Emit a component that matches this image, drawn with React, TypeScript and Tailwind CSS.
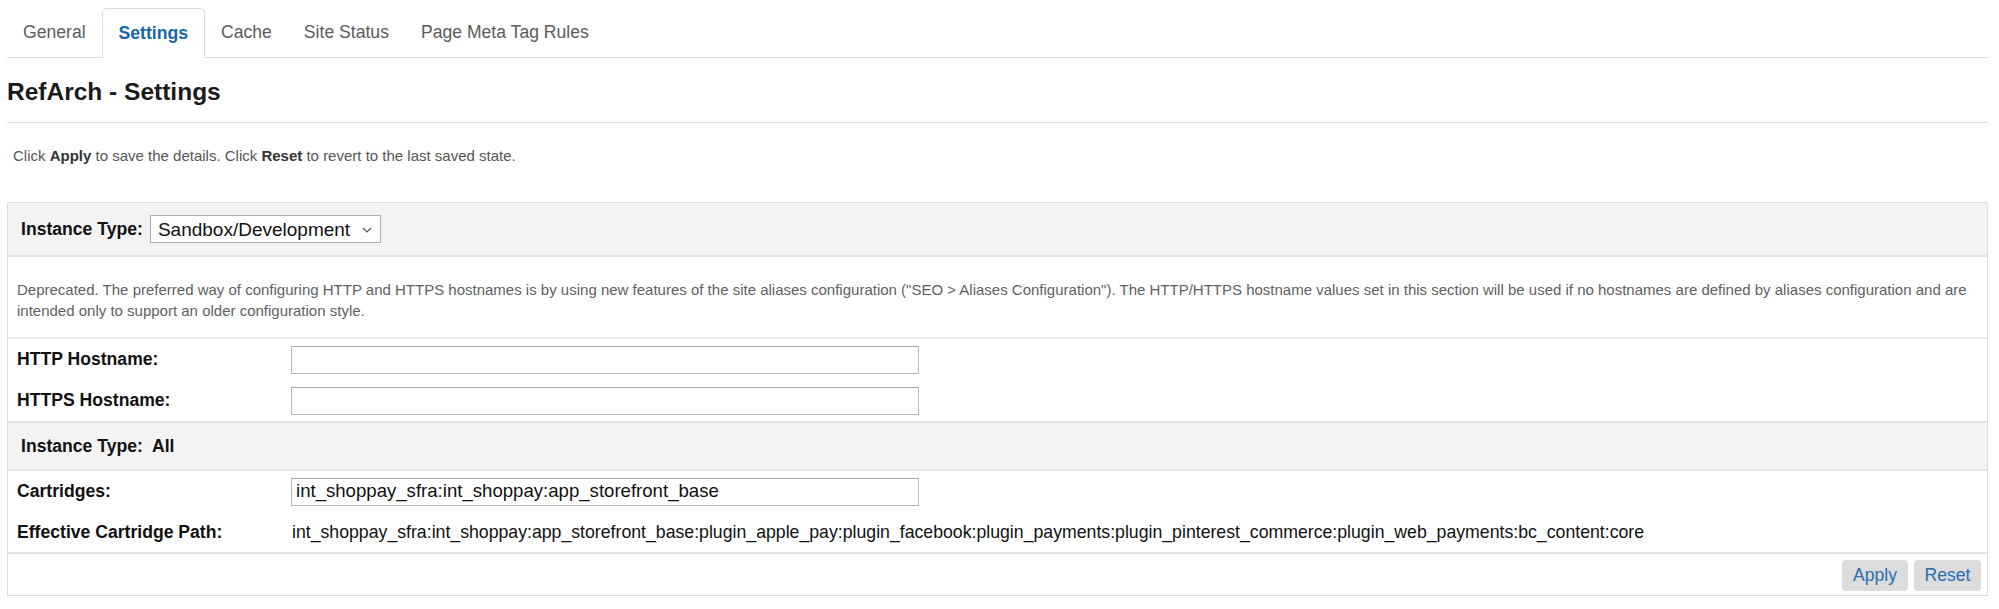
import React from "react";

const tabs = ["General", "Settings", "Cache", "Site Status", "Page Meta Tag Rules"];

function TextInput({ value }: { value?: string }) {
  return (
    <div className="h-[28px] w-[628px] border border-[#b3b8bd] border-t-[#a4a9ae] bg-white pl-[4px] flex items-center text-[18.6px] text-[#111] leading-none whitespace-nowrap overflow-hidden">
      {value}
    </div>
  );
}

export default function App() {
  return (
    <div className="bg-white min-h-[609px] pl-[7px] pr-[11px] font-['Liberation_Sans',Arial,Helvetica,sans-serif] text-[#222]">
      {/* Tabs */}
      <div className="flex items-end h-[58px] border-b border-[#dcdcdc]">
        {tabs.map((t) => {
          const active = t === "Settings";
          return (
            <div
              key={t}
              className={
                active
                  ? "h-[50px] -mb-px px-4 flex items-center bg-white border border-b-0 border-[#dcdcdc] rounded-t-[5px] text-[17.6px] font-bold text-[#1766a8]"
                  : "h-[49px] px-4 flex items-center text-[17.6px] text-[#5c5c5c]"
              }
            >
              {t}
            </div>
          );
        })}
      </div>

      {/* Title */}
      <div className="h-[65px] pt-[4px] flex items-center border-b border-[#dcdcdc]">
        <h1 className="text-[24.5px] font-bold text-[#1a1a1a] leading-none">RefArch - Settings</h1>
      </div>

      <div className="pt-[24px] pl-[6px] text-[15px] leading-[18px] text-[#555]">
        Click <b className="text-[#333]">Apply</b> to save the details. Click <b className="text-[#333]">Reset</b> to revert to the last saved state.
      </div>

      {/* Form box */}
      <div className="mt-[37px] border border-[#dedede]">
        {/* Instance type */}
        <div className="h-[54px] bg-[#f3f3f3] border-b-2 border-[#e2e2e2] flex items-center pl-[13px] gap-[7px]">
          <span className="text-[17.6px] font-bold text-[#111]">Instance Type:</span>
          <div className="h-[28px] w-[231px] bg-white border border-[#a9b0b8] flex items-center justify-between pl-[7px] pr-[8px]">
            <span className="text-[19px] text-[#111] leading-none">Sandbox/Development</span>
            <svg width="10" height="6" viewBox="0 0 10 6" className="mt-[1px]">
              <path d="M1 1 L5 5 L9 1" fill="none" stroke="#555" strokeWidth="1.2" />
            </svg>
          </div>
        </div>

        {/* Description */}
        <div className="pt-[22px] pb-[16px] pl-[9px] pr-[20px] text-[15px] leading-[21px] text-[#5f5f5f] border-b-2 border-[#ececec]">
          Deprecated. The preferred way of configuring HTTP and HTTPS hostnames is by using new features of the site aliases configuration ("SEO &gt; Aliases Configuration"). The HTTP/HTTPS hostname values set in this section will be used if no hostnames are defined by aliases configuration and are intended only to support an older configuration style.
        </div>

        {/* HTTP */}
        <div className="h-[41px] flex items-center">
          <div className="w-[283px] pl-[9px] text-[17.6px] font-bold text-[#111]">HTTP Hostname:</div>
          <TextInput />
        </div>
        <div className="h-[41px] flex items-center">
          <div className="w-[283px] pl-[9px] text-[17.6px] font-bold text-[#111]">HTTPS Hostname:</div>
          <TextInput />
        </div>

        {/* Instance type All */}
        <div className="h-[50px] bg-[#f3f3f3] border-y-2 border-[#e4e4e4] flex items-center pl-[13px]">
          <span className="text-[17.6px] font-bold text-[#111] whitespace-pre">Instance Type:  All</span>
        </div>

        {/* Cartridges */}
        <div className="h-[41px] flex items-center">
          <div className="w-[283px] pl-[9px] text-[17.6px] font-bold text-[#111]">Cartridges:</div>
          <TextInput value="int_shoppay_sfra:int_shoppay:app_storefront_base" />
        </div>
        <div className="h-[42px] flex items-center border-b-2 border-[#e4e4e4]">
          <div className="w-[283px] pl-[9px] text-[17.6px] font-bold text-[#111]">Effective Cartridge Path:</div>
          <div className="pl-[1px] text-[17.7px] text-[#111] whitespace-nowrap">
            int_shoppay_sfra:int_shoppay:app_storefront_base:plugin_apple_pay:plugin_facebook:plugin_payments:plugin_pinterest_commerce:plugin_web_payments:bc_content:core
          </div>
        </div>

        {/* Buttons */}
        <div className="pt-[6px] pb-[4px] flex items-center justify-end gap-[6px] pr-[6px]">
          <button className="h-[31px] w-[66px] rounded-[4px] bg-[#dcdcdc] text-[17.6px] text-[#2a6daf]">Apply</button>
          <button className="h-[31px] w-[67px] rounded-[4px] bg-[#dcdcdc] text-[17.6px] text-[#2a6daf]">Reset</button>
        </div>
      </div>
    </div>
  );
}
